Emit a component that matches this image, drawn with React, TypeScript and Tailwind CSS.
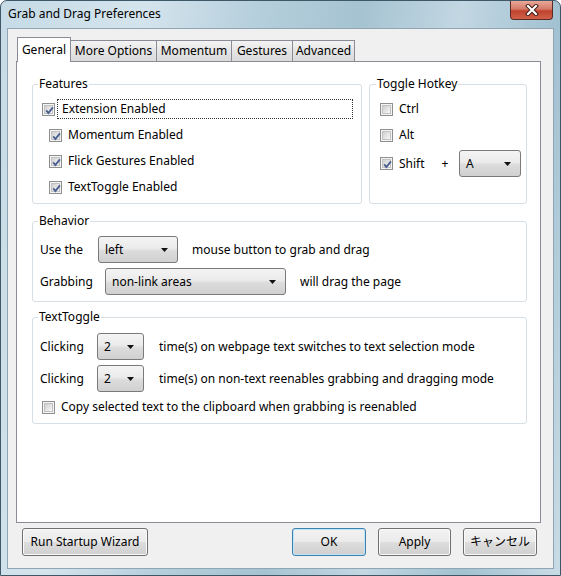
import React from 'react';

const Check = ({ checked }: { checked?: boolean }) => (
  <span className="relative flex h-[13px] w-[13px] shrink-0 items-center justify-center border border-[#8e8f8f] bg-[#f4f4f4]">
    <span className="h-[9px] w-[9px] border border-[#c2c2c2] bg-[linear-gradient(135deg,#cfcfcf,#f8f8f8)]" />
    {checked && (
      <svg className="absolute left-[1px] top-[1px]" width="11" height="11" viewBox="0 0 11 11">
        <path d="M2.2 5.4 L4.4 8 L8.9 2.4" fill="none" stroke="#4a5f92" strokeWidth="1.9" />
      </svg>
    )}
  </span>
);

const Combo = ({ value, className }: { value: string; className: string }) => (
  <div
    className={`flex h-[27px] shrink-0 items-center justify-between rounded-[3px] border border-[#7a7a7a] bg-[linear-gradient(#f4f4f4_0%,#ebebeb_45%,#dcdcdc_55%,#d0d0d0_100%)] pl-[6px] pr-[9px] ${className}`}
  >
    <span>{value}</span>
    <svg width="7" height="4" viewBox="0 0 7 4">
      <path d="M0 0 H7 L3.5 4 Z" fill="#111" />
    </svg>
  </div>
);

const Button = ({ label, className, primary }: { label: string; className: string; primary?: boolean }) => (
  <div
    className={`flex h-[28px] items-center justify-center rounded-[3px] border bg-[linear-gradient(#f2f2f2_0%,#ebebeb_48%,#dddddd_52%,#cfcfcf_100%)] ${
      primary ? 'border-[#3c7fb1] shadow-[inset_0_0_0_1px_#bfe6f7]' : 'border-[#707070] shadow-[inset_0_0_0_1px_#fafafa]'
    } ${className}`}
  >
    {label}
  </div>
);

const Tab = ({ label, className, active }: { label: string; className: string; active?: boolean }) => (
  <div
    className={`flex items-center justify-center border-x border-t border-[#898c95] ${
      active ? 'relative z-10 -mb-px h-[25px] bg-white' : 'h-[21px] bg-[linear-gradient(#f3f3f3,#e5e5e5_50%,#d9d9d9)]'
    } ${className}`}
  >
    {label}
  </div>
);

export default function App() {
  return (
    <div className="font-['Noto_Sans','Noto_Sans_CJK_JP',sans-serif] text-[12px] leading-[16px] text-black">
      <div className="flex h-[576px] w-[561px] flex-col rounded-t-[7px] border border-[#3f5868] bg-[linear-gradient(100deg,#c6dbe6_0%,#d4e4ed_22%,#b4cedb_40%,#a6c3d2_55%,#c2d7e2_70%,#a2c1d1_85%,#c9dce6_100%)] px-[6px] pb-[6px]">
        <div className="flex h-[27px] shrink-0 items-start justify-between">
          <span className="ml-[1px] mt-[5px]">Grab and Drag Preferences</span>
          <div className="mr-[1px] flex h-[19px] w-[43px] items-center justify-center rounded-b-[4px] border border-t-0 border-[#5b2a24] bg-[linear-gradient(#e9a898_0%,#d47a68_45%,#c0422c_55%,#d0604a_100%)]">
            <svg width="14" height="12" viewBox="0 0 14 12">
              <path d="M3 2 L11 10 M11 2 L3 10" stroke="#3a1712" strokeWidth="4" strokeLinecap="square" />
              <path d="M3 2 L11 10 M11 2 L3 10" stroke="#ffffff" strokeWidth="2.2" strokeLinecap="square" />
            </svg>
          </div>
        </div>

        <div className="flex flex-1 flex-col border border-[#8fa5b4] bg-[#f0f0f0] pl-[8px] pr-[12px] pt-[8px] pb-[12px]">
          <div className="flex h-[24px] shrink-0 items-end pl-[1px]">
            <Tab label="General" className="w-[54px]" active />
            <Tab label="More Options" className="-ml-px w-[87px]" />
            <Tab label="Momentum" className="-ml-px w-[76px]" />
            <Tab label="Gestures" className="-ml-px w-[62px]" />
            <Tab label="Advanced" className="-ml-px w-[63px]" />
          </div>

          <div className="flex flex-1 flex-col border border-[#898c95] bg-white pl-[15px] pr-[13px] pt-[14px]">
            <div className="flex gap-[7px]">
              <fieldset className="w-[330px] rounded-[3px] border border-[#d5dfe5]">
                <legend className="ml-[5px] px-[1px]">Features</legend>
                <div className="flex flex-col pl-[9px] pr-[8px] pt-[4px] pb-[3px]">
                  <div className="flex h-[26px] items-center">
                    <Check checked />
                    <span className="ml-[2px] flex h-[20px] flex-1 items-center border border-dotted border-[#333] pl-[4px]">
                      Extension Enabled
                    </span>
                  </div>
                  <div className="flex h-[26px] items-center pl-[7px]">
                    <Check checked />
                    <span className="ml-[6px]">Momentum Enabled</span>
                  </div>
                  <div className="flex h-[26px] items-center pl-[7px]">
                    <Check checked />
                    <span className="ml-[6px]">Flick Gestures Enabled</span>
                  </div>
                  <div className="flex h-[26px] items-center pl-[7px]">
                    <Check checked />
                    <span className="ml-[6px]">TextToggle Enabled</span>
                  </div>
                </div>
              </fieldset>

              <fieldset className="flex-1 rounded-[3px] border border-[#d5dfe5]">
                <legend className="ml-[6px] px-[1px]">Toggle Hotkey</legend>
                <div className="flex flex-col pl-[10px] pt-[4px]">
                  <div className="flex h-[26px] items-center">
                    <Check />
                    <span className="ml-[6px]">Ctrl</span>
                  </div>
                  <div className="flex h-[26px] items-center">
                    <Check />
                    <span className="ml-[6px]">Alt</span>
                  </div>
                  <div className="mt-[2px] flex h-[27px] items-center">
                    <Check checked />
                    <span className="ml-[6px] w-[40px]">Shift</span>
                    <span className="w-[12px] text-center">+</span>
                    <Combo value="A" className="ml-[8px] w-[62px]" />
                  </div>
                </div>
              </fieldset>
            </div>

            <fieldset className="mt-[9px] rounded-[3px] border border-[#d5dfe5]">
              <legend className="ml-[5px] px-[1px]">Behavior</legend>
              <div className="flex flex-col gap-[5px] pl-[7px] pt-[7px] pb-[6px]">
                <div className="flex items-center">
                  <span className="w-[58px]">Use the</span>
                  <Combo value="left" className="w-[80px]" />
                  <span className="ml-[14px]">mouse button to grab and drag</span>
                </div>
                <div className="flex items-center">
                  <span className="w-[65px]">Grabbing</span>
                  <Combo value="non-link areas" className="w-[181px]" />
                  <span className="ml-[14px]">will drag the page</span>
                </div>
              </div>
            </fieldset>

            <fieldset className="mt-[7px] rounded-[3px] border border-[#d5dfe5]">
              <legend className="ml-[5px] px-[1px]">TextToggle</legend>
              <div className="flex flex-col gap-[5px] pl-[7px] pt-[8px] pb-[6px]">
                <div className="flex items-center">
                  <span className="w-[57px]">Clicking</span>
                  <Combo value="2" className="w-[47px]" />
                  <span className="ml-[15px]">time(s) on webpage text switches to text selection mode</span>
                </div>
                <div className="flex items-center">
                  <span className="w-[57px]">Clicking</span>
                  <Combo value="2" className="w-[47px]" />
                  <span className="ml-[15px]">time(s) on non-text reenables grabbing and dragging mode</span>
                </div>
                <div className="flex h-[20px] items-center pl-[2px]">
                  <Check />
                  <span className="ml-[6px]">Copy selected text to the clipboard when grabbing is reenabled</span>
                </div>
              </div>
            </fieldset>
          </div>

          <div className="mt-[5px] flex h-[28px] shrink-0">
            <Button label="Run Startup Wizard" className="ml-[6px] w-[126px]" />
            <div className="flex-1" />
            <Button label="OK" className="w-[74px]" primary />
            <Button label="Apply" className="ml-[12px] w-[73px]" />
            <Button label="キャンセル" className="ml-[12px] mr-[4px] w-[74px]" />
          </div>
        </div>
      </div>
    </div>
  );
}
